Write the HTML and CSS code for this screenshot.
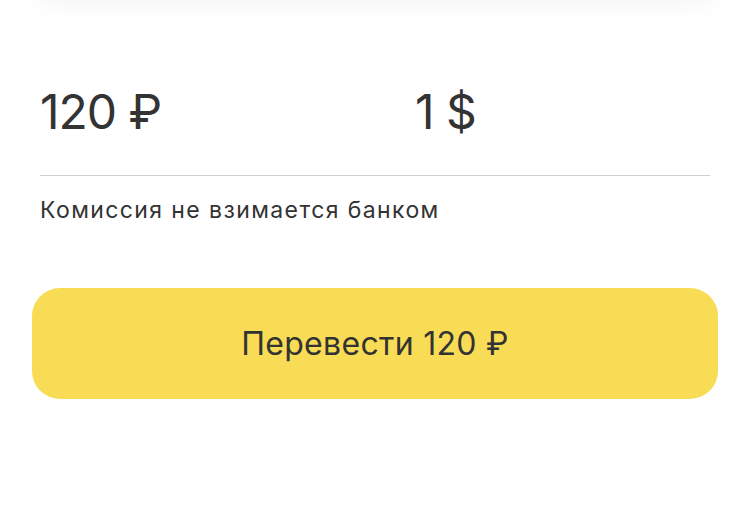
FILE: index.html
```html
<!DOCTYPE html>
<html lang="ru">
<head>
    <meta charset="UTF-8">
    <meta name="viewport" content="width=device-width, initial-scale=1.0">
    <title>Перевод</title>
    <link rel="stylesheet" href="styles.css">
</head>
<body>

    <div class="top-card"></div>

    <div class="amounts">
        <p class="amount">120 ₽</p>
        <p class="amount">1 $</p>
    </div>

    <p class="note">Комиссия не взимается банком</p>

    <a class="button" href="#">Перевести 120 ₽</a>

</body>
</html>
```

FILE: styles.css
```css
body { margin: 0; background: #fff; color: #333; font-family: Inter, "Noto Sans", sans-serif; position: relative; overflow: hidden; }
.top-card { position: absolute; left: 30px; right: 30px; top: -60px; height: 60px; background: #fff; border-radius: 30px; box-shadow: 0 0 30px rgba(0, 0, 0, 0.06); }
.amounts { display: grid; grid-template-columns: 375px 1fr; margin: 0 40px; padding-top: 83px; height: 92px; border-bottom: 1px solid #d0d0d0; }
.amount { margin: 0; font-size: 48px; line-height: 58px; letter-spacing: -1px; }
.note { margin: 20px 40px 0; font-size: 23px; line-height: 28px; letter-spacing: 1.4px; }
.button { display: flex; align-items: center; justify-content: center; margin: 64px 32px 0; height: 111px; background: #f9dc55; color: #333; text-decoration: none; border-radius: 28px; font-size: 32px; letter-spacing: 0.3px; }
```
